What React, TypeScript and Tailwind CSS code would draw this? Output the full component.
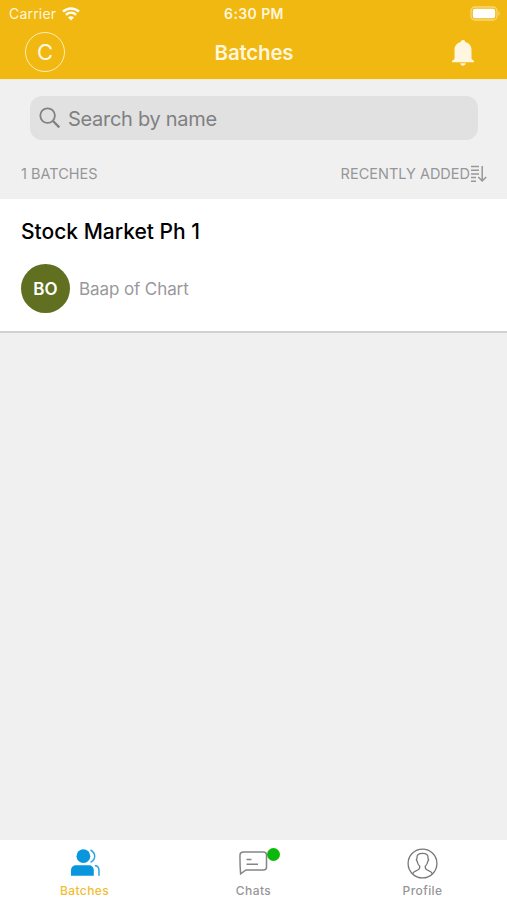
import { useState } from 'react';

interface Batch {
  id: string;
  name: string;
  owner: string;
  initials: string;
}

const BATCHES: Batch[] = [
  { id: '1', name: 'Stock Market Ph 1', owner: 'Baap of Chart', initials: 'BO' },
];

function WifiIcon() {
  return (
    <svg width="18" height="14" viewBox="0 0 18 14" fill="none" stroke="#fffdf3" strokeWidth="2.5">
      <path d="M1 4.7C5.6.3 12.4.3 17 4.7" />
      <path d="M3.9 7.9c3-2.8 7.2-2.8 10.2 0" />
      <path d="M6 10.4c1.7-1.5 4.3-1.5 6 0L9 13.5z" fill="#fffdf3" stroke="none" />
    </svg>
  );
}

function BatteryIcon() {
  return (
    <svg width="31" height="15" viewBox="0 0 31 15">
      <rect x="1" y="1" width="26" height="13" rx="4" fill="none" stroke="#f8d878" strokeWidth="1.3" />
      <rect x="2.8" y="2.8" width="22.4" height="9.4" rx="2.2" fill="#fff" />
      <path d="M28.5 5.3c1.6.6 1.6 3.8 0 4.4z" fill="#f8d878" />
    </svg>
  );
}

function BellIcon() {
  return (
    <svg width="22" height="26" viewBox="0 0 22 26" fill="#fff6e0">
      <path d="M11 0c1.4 0 2.2.9 2.3 2 3.9 1 6.2 4 6.2 7.7v9.3l2.5 2v1.3H0V21l2.5-2V9.7C2.5 6 4.8 3 8.7 2 8.8.9 9.6 0 11 0z" />
      <path d="M8.3 23.3h5.4c-.3 1.600-1.300 2.500-2.700 2.500s-2.400-.9-2.700-2.500z" />
    </svg>
  );
}

function SearchIcon() {
  return (
    <svg width="22" height="22" viewBox="0 0 22 22" fill="none" stroke="#828284">
      <circle cx="8.6" cy="8.6" r="7.3" strokeWidth="1.8" />
      <path d="M14 14l6.3 6.3" strokeWidth="2.4" />
    </svg>
  );
}

function SortIcon() {
  return (
    <svg width="17" height="18" viewBox="0 0 17 18" fill="none" stroke="#98989a" strokeWidth="1.5">
      <path d="M1 1.5h8M1 5.2h8M1 8.9h8M1 12.6h5M1 16.3h5" />
      <path d="M12.2 1v14.5M8.2 12l4 3.9 4-3.9" />
    </svg>
  );
}

function BatchesIcon() {
  return (
    <svg width="30" height="28" viewBox="0 0 30 28" fill="#0897dc">
      <circle cx="13.4" cy="7.2" r="6.9" />
      <path d="M1 26.8v-5C1 18 2.9 16.200 6.500 16.200h12c3.400 0 5.300 1.800 5.300 5.600v5z" />
      <path d="M20.500 1c2.900 1.600 4.200 3.800 4.200 6.200s-1.300 4.600-4.200 6.200" fill="none" stroke="#2da7e2" strokeWidth="1.5" />
      <path d="M24.800 16.500c2.800.3 4.200 1.900 4.200 5.100v5.200" fill="none" stroke="#2da7e2" strokeWidth="1.5" />
    </svg>
  );
}

function ChatsIcon() {
  return (
    <svg width="30" height="26" viewBox="0 0 30 26" fill="none" stroke="#858585" strokeWidth="1.5">
      <path d="M4.500 2h20c1.900 0 3 1.200 3 3v12c0 1.900-1.100 3-3 3H7l-5.400 3.800c-.5-6-.7-12.300-.6-18.800.1-1.900 1.200-3 3.500-3z" />
      <path d="M7.500 9.500h5M7.500 14.300h11.500" />
    </svg>
  );
}

function ProfileIcon() {
  return (
    <svg width="31" height="31" viewBox="0 0 31 31" fill="none" stroke="#777" strokeWidth="1.3">
      <circle cx="15.5" cy="15.5" r="14.4" />
      <path d="M5.5 26c.7-2.600 3.300-3 5.300-4 1.700-.8 2.200-1.600 1.900-3.800-1.500-1.200-2.200-2.800-2.400-4.700-1-.9-1-2.200-.3-3.100C9.600 7 11.700 5.300 15.500 5.300s5.900 1.700 5.500 5.100c.7.9.7 2.200-.3 3.100-.2 1.900-.9 3.500-2.400 4.700-.3 2.200.2 3 1.900 3.800 2 1 4.600 1.400 5.300 4" />
    </svg>
  );
}

const TABS = [
  { id: 'batches', label: 'Batches', icon: BatchesIcon, hasUnread: false },
  { id: 'chats', label: 'Chats', icon: ChatsIcon, hasUnread: true },
  { id: 'profile', label: 'Profile', icon: ProfileIcon, hasUnread: false },
];

export default function App() {
  const [activeTab, setActiveTab] = useState('batches');
  const [search, setSearch] = useState('');

  const visible = BATCHES.filter((b) => b.name.toLowerCase().includes(search.toLowerCase()));

  return (
    <div className="flex h-[900px] w-[507px] flex-col overflow-hidden bg-[#f0f0f0] font-['Inter',sans-serif]">
      {/* Header */}
      <header className="h-[79px] shrink-0 bg-[#f0b810]">
        <div className="grid h-[27px] grid-cols-3 items-center px-1.5 text-[#fff6dc]">
          <div className="flex items-center gap-1.5 pl-[3px]">
            <span className="text-[14px] tracking-[0.2px]">Carrier</span>
            <WifiIcon />
          </div>
          <span className="pl-px text-center text-[14px] font-semibold tracking-[0.4px]">6:30 PM</span>
          <div className="flex justify-end">
            <BatteryIcon />
          </div>
        </div>
        <div className="grid h-[50px] grid-cols-3 items-center px-[25px]">
          <button className="flex size-10 items-center justify-center rounded-full border-[1.5px] border-[#ffedb8] text-[22px] text-[#fff8e3]">
            C
          </button>
          <h1 className="pt-0.5 pl-px text-center text-[20.5px] font-semibold tracking-[-0.2px] text-[#fff6dc]">Batches</h1>
          <button className="flex justify-end pt-0.5 pr-2">
            <BellIcon />
          </button>
        </div>
      </header>

      {/* Search */}
      <div className="border-t border-[#f6edd0] pt-4 pr-[29px] pl-[30px]">
        <label className="flex h-11 items-center gap-[7px] rounded-xl bg-[#e1e1e1] pl-[9px]">
          <SearchIcon />
          <input
            value={search}
            onChange={(e) => setSearch(e.target.value)}
            placeholder="Search by name"
            className="flex-1 bg-transparent pt-0.5 text-[20px] tracking-[-0.3px] text-[#808082] outline-none placeholder:text-[#808082]"
          />
        </label>
      </div>

      <div className="flex h-[59px] items-center justify-between pt-2 pr-5 pl-[21px] text-[14.5px] text-[#969698]">
        <span>{BATCHES.length} BATCHES</span>
        <button className="flex items-center">
          <span>RECENTLY ADDED</span>
          <SortIcon />
        </button>
      </div>

      {/* Batch list */}
      <main className="flex-1">
        {visible.map((batch) => (
          <article key={batch.id} className="h-[134px] border-b-2 border-[#d2d2d2] bg-white px-[21px] pt-[17px]">
            <h2 className="text-[21px] leading-8 font-medium text-black">{batch.name}</h2>
            <div className="mt-4 flex items-center gap-[9px]">
              <div className="flex size-[49px] items-center justify-center rounded-full bg-[#607020] pt-0.5 text-[17px] font-semibold text-white">
                {batch.initials}
              </div>
              <span className="pt-0.5 text-[17px] tracking-[-0.1px] text-[#99999b]">{batch.owner}</span>
            </div>
          </article>
        ))}
      </main>

      {/* Bottom tabs */}
      <nav className="grid h-[60px] shrink-0 grid-cols-3 bg-white">
        {TABS.map((tab) => {
          const Icon = tab.icon;
          return (
            <button key={tab.id} onClick={() => setActiveTab(tab.id)} className="flex flex-col items-center pt-2">
              <span className="relative flex h-[30px] items-center">
                <Icon />
                {tab.hasUnread && (
                  <span className="absolute top-0 -right-[11px] size-[13px] rounded-full bg-[#0cb80c]" />
                )}
              </span>
              <span
                className={`mt-1 text-[12px] leading-[18px] font-medium tracking-[0.4px] ${
                  activeTab === tab.id ? 'text-[#f0bd35]' : 'text-[#969698]'
                }`}
              >
                {tab.label}
              </span>
            </button>
          );
        })}
      </nav>
    </div>
  );
}
